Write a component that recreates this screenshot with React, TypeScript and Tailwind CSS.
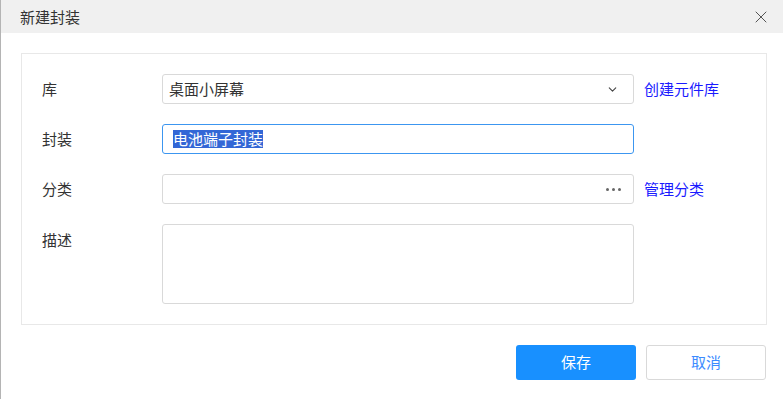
import { ChevronDown, X } from 'lucide-react'

const font = { fontFamily: '"Noto Sans CJK SC", "Liberation Sans", sans-serif' }

export default function App() {
  return (
    <div
      style={font}
      className="w-[783px] h-[399px] bg-white border-l border-[#b4b4b4] flex flex-col text-[15px] text-[#333]"
    >
      <div className="h-[33px] shrink-0 bg-[#f0f0f0] flex items-center justify-between pl-[19px] pr-[12px]">
        <span className="leading-none">新建封装</span>
        <X size={20} strokeWidth={1.1} className="text-[#444]" />
      </div>

      <div className="pl-[20px] pr-[16px] pt-[20px]">
        <div className="border border-[#e8e8e8] p-[20px] flex flex-col gap-[20px]">
          <div className="flex items-center">
            <div className="w-[120px]">库</div>
            <div className="w-[472px] h-[30px] border border-[#d9d9d9] rounded-[3px] flex items-center justify-between pl-[6px] pr-[14px]">
              <span>桌面小屏幕</span>
              <ChevronDown size={13} strokeWidth={2} className="text-[#444]" />
            </div>
            <a className="ml-[10px] text-[#1a1aff]">创建元件库</a>
          </div>

          <div className="flex items-center">
            <div className="w-[120px]">封装</div>
            <div className="w-[472px] h-[30px] border border-[#3c96f0] rounded-[3px] flex items-center pl-[10px]">
              <span className="bg-[#3367d6] text-white leading-[18px]">电池端子封装</span>
            </div>
          </div>

          <div className="flex items-center">
            <div className="w-[120px]">分类</div>
            <div className="w-[472px] h-[30px] border border-[#d9d9d9] rounded-[3px] flex items-center justify-end pr-[12px]">
              <span className="flex gap-[3px]">
                <span className="w-[3px] h-[3px] bg-[#666] rounded-full" />
                <span className="w-[3px] h-[3px] bg-[#666] rounded-full" />
                <span className="w-[3px] h-[3px] bg-[#666] rounded-full" />
              </span>
            </div>
            <a className="ml-[10px] text-[#1a1aff]">管理分类</a>
          </div>

          <div className="flex items-start">
            <div className="w-[120px] pt-[5px]">描述</div>
            <div className="w-[472px] h-[80px] border border-[#d9d9d9] rounded-[3px]" />
          </div>
        </div>

        <div className="flex justify-end gap-[10px] pt-[20px] pr-[1px]">
          <button
            type="button"
            className="w-[120px] h-[35px] bg-[#1890ff] text-white rounded-[3px]"
          >
            保存
          </button>
          <button
            type="button"
            className="w-[120px] h-[35px] bg-white border border-[#d9d9d9] text-[#3d8bff] rounded-[3px]"
          >
            取消
          </button>
        </div>
      </div>
    </div>
  )
}
